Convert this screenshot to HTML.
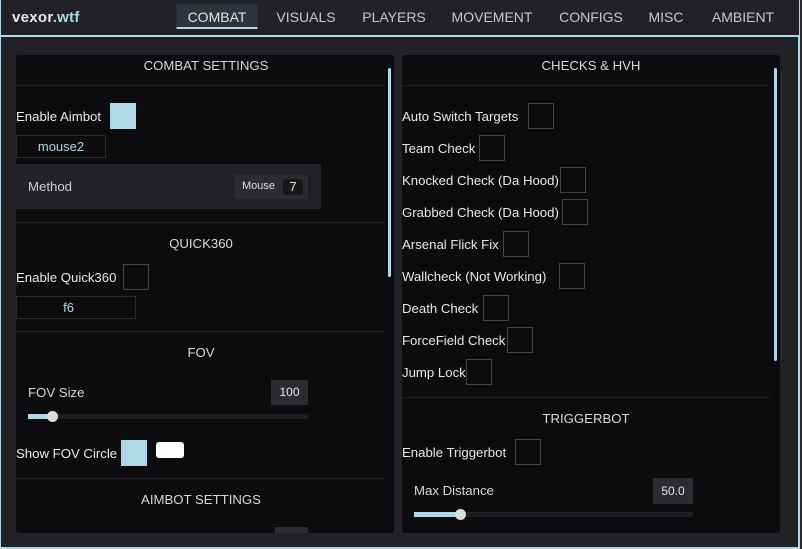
<!DOCTYPE html>
<html><head><meta charset="utf-8"><style>
*{margin:0;padding:0;box-sizing:border-box}
body{width:802px;height:549px;background:#2a2c30;position:relative;overflow:hidden;font-family:"Liberation Sans",sans-serif;color:#e6e6e6}
.win{position:absolute;left:0;top:0;width:800px;height:549px;background:#222226;border-left:1px solid #add8e6;border-right:2px solid #add8e6;border-bottom:2px solid #add8e6}
.bar{position:absolute;left:0;top:0;width:798px;height:37px;background:#222226;border-bottom:2px solid #add8e6}
.logo{position:absolute;left:11px;top:9px;font-size:15px;font-weight:bold;color:#e8e8e8;letter-spacing:.3px}
.logo span{color:#add8e6}
.tab{position:absolute;top:4px;height:25px;line-height:26px;font-size:14px;color:#c8c8cc;transform:translateX(-50%);white-space:nowrap}
.tab.act{background:#30333b;border-bottom:2px solid #add8e6;width:81px;text-align:center;color:#e4e4e4}
.panel{position:absolute;top:55px;width:378px;height:478px;background:#0c0c0e;border-radius:3px;overflow:hidden}
.a{position:absolute;white-space:nowrap}
.t{font-size:13.2px;color:#e8e8e8;margin-top:1px}
.h{font-size:13.2px;color:#d8d8dc;transform:translateX(-50%);margin-top:1px}
.sep{position:absolute;height:1px;background:#222226}
.cb{position:absolute;width:26px;height:26px;border:1px solid #444448}
.on{background:#add8e6;border:none}
.sb{position:absolute;width:3px;background:#add8e6;border-radius:2px}
</style></head><body>
<div class="win">
<div class="bar">
<div class="logo">vexor<span>.wtf</span></div>
<div class="tab act" style="left:216px">COMBAT</div>
<div class="tab" style="left:305px">VISUALS</div>
<div class="tab" style="left:393px">PLAYERS</div>
<div class="tab" style="left:491px">MOVEMENT</div>
<div class="tab" style="left:590px">CONFIGS</div>
<div class="tab" style="left:665px">MISC</div>
<div class="tab" style="left:742px">AMBIENT</div>
</div>

<div class="panel" style="left:15px">
<div class="a h" style="left:190px;top:2px">COMBAT SETTINGS</div>
<div class="sep" style="left:0;top:30px;width:369px"></div>
<div class="sb" style="left:372px;top:13px;height:209px"></div>
<div class="a t" style="left:0;top:53px">Enable Aimbot</div>
<div class="cb on" style="left:94px;top:48px"></div>
<div class="a" style="left:0;top:80px;width:90px;height:23px;border:1px solid #2a2a2e;text-align:center;font-size:13px;line-height:21px;color:#add8e6">mouse2</div>
<div class="a" style="left:0;top:109px;width:305px;height:45px;background:#222226"></div>
<div class="a t" style="left:12px;top:123px;color:#d0d0d0">Method</div>
<div class="a" style="left:218px;top:120px;width:74px;height:24px;background:#2b2b30"></div>
<div class="a" style="left:226px;top:125px;font-size:11px;color:#ddd">Mouse</div>
<div class="a" style="left:267px;top:124px;width:20px;height:16px;background:#18181b;border-radius:3px;font-size:13px;text-align:center;line-height:16px">7</div>
<div class="sep" style="left:0;top:167px;width:369px"></div>
<div class="a h" style="left:185px;top:180px">QUICK360</div>
<div class="a t" style="left:0;top:214px">Enable Quick360</div>
<div class="cb" style="left:107px;top:209px"></div>
<div class="a" style="left:0;top:241px;width:120px;height:23px;border:1px solid #2a2a2e;text-align:center;font-size:13px;line-height:21px;color:#add8e6;padding-right:15px">f6</div>
<div class="sep" style="left:0;top:276px;width:369px"></div>
<div class="a h" style="left:185px;top:289px">FOV</div>
<div class="a t" style="left:12px;top:329px;color:#d8d8d8">FOV Size</div>
<div class="a" style="left:255px;top:325px;width:37px;height:25px;background:#2b2b30;font-size:12px;text-align:center;line-height:25px">100</div>
<div class="a" style="left:12px;top:359px;width:280px;height:5px;background:#1e1e22"></div>
<div class="a" style="left:12px;top:359px;width:24px;height:5px;background:#add8e6"></div>
<div class="a" style="left:31px;top:356px;width:11px;height:11px;border-radius:50%;background:#ddd"></div>
<div class="a t" style="left:0;top:390px">Show FOV Circle</div>
<div class="cb on" style="left:105px;top:385px"></div>
<div class="a" style="left:140px;top:387px;width:28px;height:16px;background:#fff;border-radius:3px"></div>
<div class="sep" style="left:0;top:423px;width:369px"></div>
<div class="a h" style="left:185px;top:436px">AIMBOT SETTINGS</div>
<div class="a" style="left:259px;top:472px;width:33px;height:10px;background:#2b2b30"></div>
</div>

<div class="panel" style="left:401px">
<div class="a h" style="left:189px;top:2px">CHECKS &amp; HVH</div>
<div class="sep" style="left:0;top:30px;width:368px"></div>
<div class="sb" style="left:372px;top:13px;height:293px"></div>
<div class="a t" style="left:0;top:53px">Auto Switch Targets</div><div class="cb" style="left:126px;top:48px"></div>
<div class="a t" style="left:0;top:85px">Team Check</div><div class="cb" style="left:77px;top:80px"></div>
<div class="a t" style="left:0;top:117px">Knocked Check (Da Hood)</div><div class="cb" style="left:158px;top:112px"></div>
<div class="a t" style="left:0;top:149px">Grabbed Check (Da Hood)</div><div class="cb" style="left:160px;top:144px"></div>
<div class="a t" style="left:0;top:181px">Arsenal Flick Fix</div><div class="cb" style="left:101px;top:176px"></div>
<div class="a t" style="left:0;top:213px">Wallcheck (Not Working)</div><div class="cb" style="left:157px;top:208px"></div>
<div class="a t" style="left:0;top:245px">Death Check</div><div class="cb" style="left:81px;top:240px"></div>
<div class="a t" style="left:0;top:277px">ForceField Check</div><div class="cb" style="left:105px;top:272px"></div>
<div class="a t" style="left:0;top:309px">Jump Lock</div><div class="cb" style="left:64px;top:304px"></div>
<div class="sep" style="left:0;top:342px;width:368px"></div>
<div class="a h" style="left:184px;top:355px">TRIGGERBOT</div>
<div class="a t" style="left:0;top:389px">Enable Triggerbot</div><div class="cb" style="left:113px;top:384px"></div>
<div class="a t" style="left:12px;top:427px;color:#d8d8d8">Max Distance</div>
<div class="a" style="left:251px;top:423px;width:40px;height:26px;background:#2b2b30;font-size:12px;text-align:center;line-height:26px">50.0</div>
<div class="a" style="left:12px;top:457px;width:279px;height:5px;background:#1e1e22"></div>
<div class="a" style="left:12px;top:457px;width:47px;height:5px;background:#add8e6"></div>
<div class="a" style="left:53px;top:454px;width:11px;height:11px;border-radius:50%;background:#ddd"></div>
</div>
</div>
</body></html>
